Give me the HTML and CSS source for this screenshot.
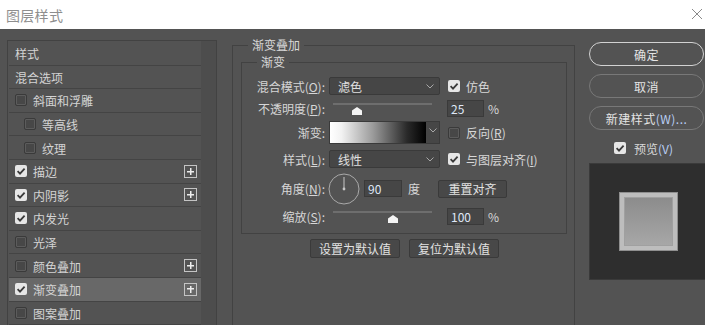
FILE: index.html
```html
<!DOCTYPE html>
<html lang="zh">
<head>
<meta charset="utf-8">
<title>图层样式</title>
<link rel="stylesheet" href="styles.css">
</head>
<body>
<div class="titlebar">
  <span class="title">图层样式</span>
  <svg class="close" width="12" height="12" viewBox="0 0 12 12"><path d="M1 1 L11 11 M11 1 L1 11" stroke="#8a8a8a" stroke-width="1" fill="none"/></svg>
</div>
<div class="dialog">
  <div class="sidebar">
    <div class="list">
      <div class="item plain">样式</div>
      <div class="item plain">混合选项</div>
      <div class="item"><span class="cb"></span><span class="lbl">斜面和浮雕</span></div>
      <div class="item sub"><span class="cb"></span><span class="lbl">等高线</span></div>
      <div class="item sub"><span class="cb"></span><span class="lbl">纹理</span></div>
      <div class="item"><span class="cb on"><svg width="12" height="12" viewBox="0 0 12 12"><path d="M2.6 6.2 L5 8.6 L9.6 3.6" stroke="#3a3a3a" stroke-width="1.8" fill="none"/></svg></span><span class="lbl">描边</span><span class="plus"></span></div>
      <div class="item"><span class="cb on"><svg width="12" height="12" viewBox="0 0 12 12"><path d="M2.6 6.2 L5 8.6 L9.6 3.6" stroke="#3a3a3a" stroke-width="1.8" fill="none"/></svg></span><span class="lbl">内阴影</span><span class="plus"></span></div>
      <div class="item"><span class="cb on"><svg width="12" height="12" viewBox="0 0 12 12"><path d="M2.6 6.2 L5 8.6 L9.6 3.6" stroke="#3a3a3a" stroke-width="1.8" fill="none"/></svg></span><span class="lbl">内发光</span></div>
      <div class="item"><span class="cb"></span><span class="lbl">光泽</span></div>
      <div class="item"><span class="cb"></span><span class="lbl">颜色叠加</span><span class="plus"></span></div>
      <div class="item selected"><span class="cb on"><svg width="12" height="12" viewBox="0 0 12 12"><path d="M2.6 6.2 L5 8.6 L9.6 3.6" stroke="#3a3a3a" stroke-width="1.8" fill="none"/></svg></span><span class="lbl">渐变叠加</span><span class="plus"></span></div>
      <div class="item"><span class="cb"></span><span class="lbl">图案叠加</span></div>
    </div>
    <div class="scroll"></div>
  </div>

  <div class="main">
    <fieldset class="group outer">
      <legend>渐变叠加</legend>
      <fieldset class="group inner">
        <legend>渐变</legend>
        <div class="row r1">
          <span class="label">混合模式(<u>O</u>):</span>
          <div class="select"><span>滤色</span><svg class="chev" width="8" height="5" viewBox="0 0 8 5"><path d="M0.5 0.5 L4 4 L7.5 0.5" stroke="#a8a8a8" fill="none"/></svg></div>
          <label class="check"><span class="cb on"><svg width="12" height="12" viewBox="0 0 12 12"><path d="M2.6 6.2 L5 8.6 L9.6 3.6" stroke="#3a3a3a" stroke-width="1.8" fill="none"/></svg></span><span>仿色</span></label>
        </div>
        <div class="row r2">
          <span class="label">不透明度(<u>P</u>):</span>
          <div class="slider"><span class="track"></span><span class="thumb" style="left: 23px"></span></div>
          <span class="num">25</span>
          <span class="unit">%</span>
        </div>
        <div class="row r3">
          <span class="label">渐变:</span>
          <div class="gradient"><span class="swatch"></span><span class="gbtn"><svg class="chev" width="8" height="5" viewBox="0 0 8 5"><path d="M0.5 0.5 L4 4 L7.5 0.5" stroke="#a8a8a8" fill="none"/></svg></span></div>
          <label class="check"><span class="cb"></span><span>反向(<u>R</u>)</span></label>
        </div>
        <div class="row r4">
          <span class="label">样式(<u>L</u>):</span>
          <div class="select"><span>线性</span><svg class="chev" width="8" height="5" viewBox="0 0 8 5"><path d="M0.5 0.5 L4 4 L7.5 0.5" stroke="#a8a8a8" fill="none"/></svg></div>
          <label class="check"><span class="cb on"><svg width="12" height="12" viewBox="0 0 12 12"><path d="M2.6 6.2 L5 8.6 L9.6 3.6" stroke="#3a3a3a" stroke-width="1.8" fill="none"/></svg></span><span>与图层对齐(<u>I</u>)</span></label>
        </div>
        <div class="row r5">
          <span class="label">角度(<u>N</u>):</span>
          <svg class="dial" width="32" height="32" viewBox="0 0 32 32"><circle cx="16" cy="16" r="15" stroke="#a9a9a9" stroke-width="1" fill="none"/><path d="M16 16 L16 4" stroke="#c8c8c8" stroke-width="1"/><circle cx="16" cy="16" r="1.4" fill="#c8c8c8"/></svg>
          <span class="num angle">90</span>
          <span class="deg">度</span>
          <span class="btn reset">重置对齐</span>
        </div>
        <div class="row r6">
          <span class="label">缩放(<u>S</u>):</span>
          <div class="slider"><span class="track"></span><span class="thumb" style="left: 59px"></span></div>
          <span class="num">100</span>
          <span class="unit">%</span>
        </div>
      </fieldset>
      <div class="defaults">
        <span class="btn dbtn">设置为默认值</span>
        <span class="btn dbtn">复位为默认值</span>
      </div>
    </fieldset>
  </div>

  <div class="actions">
    <span class="pill primary">确定</span>
    <span class="pill">取消</span>
    <span class="pill"><span>新建样式<span class="accel">(W)...</span></span></span>
    <label class="check preview-check"><span class="cb on"><svg width="12" height="12" viewBox="0 0 12 12"><path d="M2.6 6.2 L5 8.6 L9.6 3.6" stroke="#3a3a3a" stroke-width="1.8" fill="none"/></svg></span><span>预览<span class="accel">(V)</span></span></label>
    <div class="preview">
      <div class="square"><div class="square-inner"></div></div>
    </div>
  </div>
</div>
</body>
</html>
```
FILE: styles.css
```css
* { box-sizing: border-box; }
html, body {
  margin: 0;
  padding: 0;
  width: 705px;
  height: 325px;
  overflow: hidden;
  font-family: "Noto Sans CJK SC", "Microsoft YaHei", "Noto Sans", sans-serif;
  font-size: 12px;
  color: #d8d8d8;
  background: #535353;
}
u { text-decoration: underline; text-underline-offset: 1px; }

.titlebar {
  height: 29px;
  background: #ffffff;
  display: flex;
  align-items: center;
  justify-content: space-between;
  padding: 0 2px 0 6px;
}
.title {
  font-size: 14px;
  color: #8e8e8e;
  line-height: 16px;
  letter-spacing: 0.3px;
}
.close { margin-right: 0; margin-top: -1px; }

.dialog {
  display: flex;
  height: 296px;
  padding-left: 7px;
  background: #535353;
  overflow: hidden;
}

/* ---------- sidebar ---------- */
.sidebar {
  margin-top: 11px;
  width: 210px;
  flex: none;
  border: 1px solid #424242;
  border-bottom: none;
  display: flex;
  height: 300px;
}
.list {
  width: 193px;
  padding-left: 1px;
  padding-top: 1px;
  background: #535353;
}
.scroll {
  width: 15px;
  background: #4d4d4d;
}
.item {
  height: 23.6px;
  border-bottom: 1px solid #444444;
  display: flex;
  align-items: center;
  padding-left: 6px;
  padding-top: 2px;
  color: #d4d4d4;
  line-height: 14px;
}
.item .cb { margin-top: -2px; }
.item .plus { margin-top: -2px; }
.item.sub { padding-left: 15px; }
.item .lbl { margin-left: 6px; }
.item.selected { background: #686868; }
.plus {
  margin-left: auto;
  margin-right: 4px;
  width: 13px;
  height: 13px;
  border: 1px solid #c4c4c4;
  background:
    linear-gradient(#ececec, #ececec) center / 7px 1.5px no-repeat,
    linear-gradient(#ececec, #ececec) center / 1.5px 7px no-repeat;
}

/* ---------- checkbox ---------- */
.cb {
  width: 12px;
  height: 12px;
  flex: none;
  border-radius: 2px;
  background: #474747;
  border: 1px solid #3a3a3a;
  box-shadow: inset 0 0 0 1px #5c5c5c;
  display: inline-flex;
}
.cb.on {
  background: #e6e6e6;
  border: none;
  box-shadow: none;
}
.cb svg { display: block; }

/* ---------- main ---------- */
.main {
  margin-left: 15px;
  width: 343px;
  flex: none;
  margin-top: 8px;
}
fieldset.group {
  margin: 0;
  min-width: 0;
  border: 1px solid #424242;
}
fieldset.group legend {
  line-height: 16px;
  padding: 0 4px;
  color: #d8d8d8;
}
.outer {
  height: 320px;
  padding: 0 7px 0 8px;
  border-bottom: none;
}
.outer > legend { margin-left: 7px; }
.inner {
  margin-top: 1px !important;
  padding: 7px 0 8px 0;
}
.inner > legend { margin-left: 15px; }

.row {
  display: flex;
  align-items: center;
}
.r1 { height: 18px; margin-bottom: 4px; }
.r2 { height: 18px; margin-bottom: 4px; }
.r3 { height: 23px; margin-bottom: 6px; }
.r4 { height: 18px; margin-bottom: 5px; }
.r5 { height: 31px; margin-bottom: 4px; }
.r6 { height: 17px; }

.label {
  width: 83px;
  flex: none;
  text-align: right;
  margin-right: 4px;
  color: #d6d6d6;
  white-space: nowrap;
}
.select {
  width: 111px;
  height: 18px;
  flex: none;
  background: #464646;
  border: 1px solid #3a3a3a;
  border-radius: 2px;
  display: flex;
  align-items: center;
  justify-content: space-between;
  padding: 0 5px 0 8px;
  color: #e0e0e0;
}
.check {
  display: flex;
  align-items: center;
  gap: 6px;
  margin-left: 8px;
  color: #d8d8d8;
  white-space: nowrap;
}

.slider {
  width: 111px;
  height: 100%;
  flex: none;
  position: relative;
}
.track {
  position: absolute;
  left: 4px;
  width: 99px;
  height: 2px;
  background: #6e6e6e;
}
.r2 .track { top: 4px; }
.r6 .track { top: 3px; }
.thumb {
  position: absolute;
  width: 10px;
  height: 8px;
  background: #f4f4f4;
  clip-path: polygon(50% 0, 100% 45%, 100% 100%, 0 100%, 0 45%);
}
.r2 .thumb { top: 8px; }
.r6 .thumb { top: 7px; }

.num {
  width: 37px;
  height: 17px;
  flex: none;
  margin-left: 7px;
  background: #464646;
  border: 1px solid #3a3a3a;
  display: flex;
  align-items: center;
  padding-left: 3px;
  color: #dfe7f7;
}
.unit { margin-left: 4px; color: #d8d8d8; }

.gradient {
  width: 111px;
  height: 23px;
  flex: none;
  display: flex;
  border: 1px solid #3a3a3a;
}
.swatch {
  flex: 1;
  background: linear-gradient(to right, #ffffff 0%, #f2f2f2 12%, #9a9a9a 45%, #2a2a2a 80%, #000000 100%);
}
.gbtn {
  width: 13px;
  background: #464646;
  display: flex;
  align-items: flex-start;
  justify-content: center;
  padding-top: 6px;
}

.dial { flex: none; margin-left: -1px; }
.num.angle { margin-left: 4px; width: 38px; }
.deg { margin-left: 6px; color: #d8d8d8; }
.btn {
  display: flex;
  align-items: center;
  justify-content: center;
  background: #484848;
  border: 1px solid #3a3a3a;
  border-radius: 2px;
  color: #e2e2e2;
  white-space: nowrap;
}
.reset { margin-left: 18px; width: 69px; height: 18px; }

.defaults {
  display: flex;
  justify-content: center;
  gap: 9px;
  margin-top: 5px;
  padding-left: 1px;
}
.dbtn { width: 90px; height: 19px; }

/* ---------- actions ---------- */
.actions {
  margin-left: 14px;
  width: 116px;
  flex: none;
  padding-top: 13px;
  display: flex;
  flex-direction: column;
}
.pill {
  height: 24px;
  width: 115px;
  border: 1px solid #787878;
  border-radius: 12px;
  display: flex;
  align-items: center;
  justify-content: center;
  color: #e4e4e4;
  margin-bottom: 8px;
  letter-spacing: 0.5px;
}
.pill.primary {
  border: 1.5px solid #d2d2d2;
}
.accel { color: #b9cff5; }
.preview-check {
  margin-left: 25px;
  margin-top: 2px;
  height: 16px;
  gap: 8px;
}
.preview {
  margin-top: 7px;
  height: 117px;
  width: 118px;
  background: #2e2e2e;
  border: 1px solid #3a3a3a;
  display: flex;
  align-items: center;
  justify-content: center;
  padding-left: 1px;
}
.square {
  width: 59px;
  height: 59px;
  background: #bdbdbd;
  border: 1px solid #8f8f8f;
  padding: 4px;
}
.square-inner {
  width: 100%;
  height: 100%;
  background: linear-gradient(#8c8c8c, #a7a7a7);
  border: 1px solid #a0a0a0;
}
```
